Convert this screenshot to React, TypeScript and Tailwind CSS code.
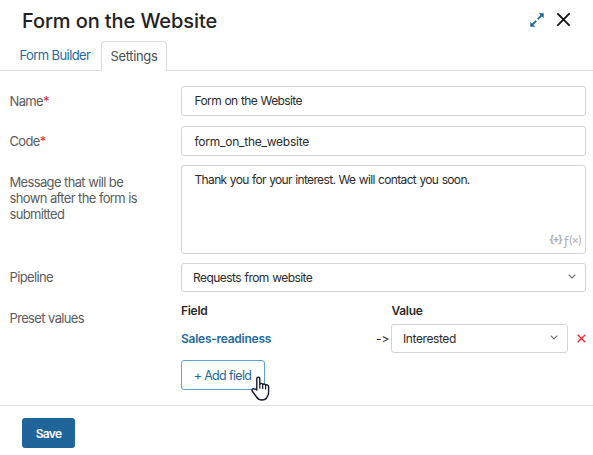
import type { ReactNode } from 'react';

function Chevron() {
  return (
    <svg className="mb-0.5" width="8" height="5" viewBox="0 0 8 5" fill="none" stroke="#6b6b6b" strokeWidth="1.2">
      <path d="M0.7 0.6L4 3.9L7.3 0.6" />
    </svg>
  );
}

function Label({ children, required }: { children: ReactNode; required?: boolean }) {
  return (
    <div className="text-[13px] leading-4 tracking-[-0.65px] [word-spacing:0.2px] text-[#5c5c5c]">
      {children}
      {required && <span className="text-[#e8292f]">*</span>}
    </div>
  );
}

function Cursor() {
  return (
    <svg className="absolute top-4 left-[70px]" width="19" height="25" viewBox="0 0 19 25" fill="#fff" stroke="#17172b" strokeWidth="1.4" strokeLinejoin="round" strokeLinecap="round">
      <path d="M5.8 14V2.8C5.8 0.6 8.8 0.6 8.8 2.8V8.4C9.2 7 11.4 7.1 11.7 8.6C12.3 7.5 14.3 7.8 14.6 9.3C15.3 8.4 17.6 8.7 17.6 10.8V16.6C17.6 19 16.6 20.2 15.8 21.6C14.9 23.3 13.4 24 11 24C8.2 24 6.8 23 5.5 21C4.3 19.1 2.8 17 1.3 15.2C0.3 13.9 1.5 12.5 3 12.7C4.2 12.8 5.1 13.4 5.8 14Z" />
      <path d="M8.8 8.6V12.2M11.7 9V12.6M14.6 9.8V13" fill="none" strokeWidth="1.2" />
    </svg>
  );
}

export default function App() {
  return (
    <div className="flex h-[455px] w-[593px] flex-col overflow-hidden bg-white font-['Inter','Liberation_Sans',sans-serif] text-[#2b2b2b]">
      <header className="flex h-[41px] shrink-0 items-center pr-[23px] pl-[22px]">
        <h1 className="text-xl leading-6 font-medium tracking-[-0.1px] text-[#222]">Form on the Website</h1>
        <button className="mb-0.5 ml-auto" aria-label="Expand">
          <svg width="14" height="14" viewBox="0 0 14 14" fill="#1f6a9e">
            <path d="M8.7 0.3H13.7V5.3ZM0.3 8.7V13.7H5.3Z" />
            <path d="M11.8 2.2L7.8 6.2M6.2 7.8L2.2 11.8" stroke="#1f6a9e" strokeWidth="1.9" />
          </svg>
        </button>
        <button className="mb-0.5 ml-[13px]" aria-label="Close">
          <svg width="13" height="13" viewBox="0 0 13 13" stroke="#111" strokeWidth="1.8" strokeLinecap="round">
            <path d="M0.9 0.9L12.1 12.1M12.1 0.9L0.9 12.1" />
          </svg>
        </button>
      </header>

      <nav className="flex h-[30px] shrink-0 border-b border-[#dcdce4] pl-[19.5px] text-[13px]">
        <a className="flex w-[81.5px] items-center tracking-[-0.6px] whitespace-nowrap text-[#1f6a9e]">Form Builder</a>
        <a className="-mb-px flex w-[66px] items-center justify-center rounded-t-sm border border-b-0 border-[#dcdce4] bg-white tracking-[-0.35px] text-[#495057]">Settings</a>
      </nav>

      <main className="flex shrink-0 flex-col pt-[15px] pl-[9.5px] text-xs leading-4 tracking-[-0.65px] [word-spacing:0.6px]">
        <div className="flex h-[30px] items-center">
          <div className="w-[171.5px]"><Label required>Name</Label></div>
          <div className="flex h-[30px] w-[405px] items-center rounded-[3px] border border-[#d4d4d4] pl-[12.5px] tracking-[-0.6px]">Form on the Website</div>
        </div>
        <div className="mt-2.5 flex h-[30px] items-center">
          <div className="w-[171.5px]"><Label required>Code</Label></div>
          <div className="flex h-[30px] w-[405px] items-center rounded-[3px] border border-[#d4d4d4] pt-0.5 pl-[12.5px] tracking-[-0.25px]">form_on_the_website</div>
        </div>
        <div className="mt-[9px] flex h-[89px]">
          <div className="w-[171.5px] pt-[9px] pr-7"><Label>Message that will be shown after the form is submitted</Label></div>
          <div className="flex w-[405px] flex-col justify-between rounded-[3px] border border-[#d4d4d4] pt-[6px] pr-1 pb-[5px] pl-[12.5px]">
            <span>Thank you for your interest. We will contact you soon.</span>
            <span className="flex h-4 items-center self-end text-[11px] tracking-[-1.2px] text-[#b0b0b0]">
              <span className="text-[10.5px] font-bold tracking-[-1.6px]">{'{+}'}</span>
              <span className="ml-px font-['Open_Sans',sans-serif] text-[13px]">ƒ</span>
              <span className="text-[11.5px]">(×)</span>
            </span>
          </div>
        </div>
        <div className="mt-[9px] flex h-[29px] items-center">
          <div className="w-[171.5px] pb-px"><Label>Pipeline</Label></div>
          <div className="flex h-[29px] w-[405px] items-center justify-between rounded-[3px] border border-[#d4d4d4] pr-[9px] pl-[11px]">
            <span className="pt-px tracking-[-0.55px]">Requests from website</span>
            <Chevron />
          </div>
        </div>
        <div className="mt-[11px] flex">
          <div className="w-[171.5px] pt-[7px]"><Label>Preset values</Label></div>
          <div className="flex flex-col">
            <div className="flex h-4 items-center font-semibold tracking-[-0.3px]">
              <span className="w-[210.5px]">Field</span>
              <span>Value</span>
            </div>
            <div className="mt-[5px] flex h-[29px] items-center">
              <span className="w-[195px] pt-px font-semibold tracking-[-0.26px] text-[#1f6a9e]">Sales-readiness</span>
              <span className="w-[15px] tracking-[-0.1px] whitespace-nowrap">-&gt;</span>
              <div className="flex h-[29px] w-[177px] items-center justify-between rounded-[3px] border border-[#d4d4d4] pr-[9px] pl-[11px]">
                <span className="pt-px tracking-[-0.4px]">Interested</span>
                <Chevron />
              </div>
              <svg className="ml-[9px]" width="9" height="9" viewBox="0 0 9 9" stroke="#f0222e" strokeWidth="1.3">
                <path d="M0.7 0.7L8.3 8.3M8.3 0.7L0.7 8.3" />
              </svg>
            </div>
            <div className="relative mt-[7px] flex">
              <button className="h-[30px] w-[84px] rounded-[3px] border border-[#5fa3d3] pt-0.5 pr-px text-[12.5px] tracking-[-0.65px] text-[#1f6a9e]">+ Add field</button>
              <Cursor />
            </div>
          </div>
        </div>
      </main>

      <footer className="mt-[15px] flex flex-1 border-t border-[#e2e2e2] pt-3 pl-[22px]">
        <button className="h-[30px] w-[53px] rounded-[3px] bg-[#1f6599] pt-0.5 text-xs font-semibold tracking-[-0.7px] text-white">Save</button>
      </footer>
    </div>
  );
}
